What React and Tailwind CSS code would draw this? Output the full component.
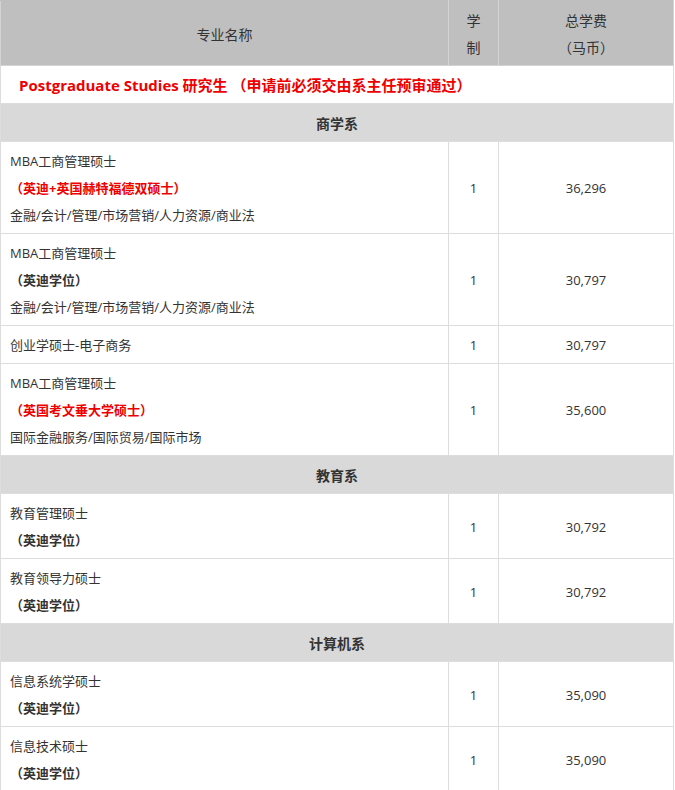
const sections = [
  {
    name: '商学系',
    rows: [
      { title: 'MBA工商管理硕士', note: '（英迪+英国赫特福德双硕士）', red: true, extra: '金融/会计/管理/市场营销/人力资源/商业法', fee: '36,296' },
      { title: 'MBA工商管理硕士', note: '（英迪学位）', extra: '金融/会计/管理/市场营销/人力资源/商业法', fee: '30,797' },
      { title: '创业学硕士-电子商务', fee: '30,797' },
      { title: 'MBA工商管理硕士', note: '（英国考文垂大学硕士）', red: true, extra: '国际金融服务/国际贸易/国际市场', fee: '35,600' },
    ],
  },
  {
    name: '教育系',
    rows: [
      { title: '教育管理硕士', note: '（英迪学位）', fee: '30,792' },
      { title: '教育领导力硕士', note: '（英迪学位）', fee: '30,792' },
    ],
  },
  {
    name: '计算机系',
    rows: [
      { title: '信息系统学硕士', note: '（英迪学位）', fee: '35,090' },
      { title: '信息技术硕士', note: '（英迪学位）', fee: '35,090' },
    ],
  },
];

const cell = 'border border-[#dddddd] px-[9px] pt-[6px] pb-[4px] leading-[27px]';

export default function App() {
  return (
    <div className="w-[675px] bg-white text-[13px] text-[#333333]" style={{ fontFamily: '"Open Sans", "Noto Sans CJK SC", sans-serif' }}>
      <table className="w-[674px] border-collapse table-fixed">
        <colgroup>
          <col className="w-[448px]" />
          <col className="w-[50px]" />
          <col />
        </colgroup>
        <thead>
          <tr className="bg-[#bfbfbf]">
            <th className="border border-[#d3d3d3] border-t-[#bfbfbf] px-[9px] pt-[6px] pb-[4px] leading-[27px] font-normal text-[14px]">专业名称</th>
            <th className="border border-[#d3d3d3] border-t-[#bfbfbf] pt-[6px] pb-[4px] leading-[27px] font-normal text-[14px]">学<br />制</th>
            <th className="border border-[#d3d3d3] border-t-[#bfbfbf] pt-[6px] pb-[4px] leading-[27px] font-normal text-[14px]">总学费<br />（马币）</th>
          </tr>
        </thead>
        <tbody>
          <tr>
            <td colSpan={3} className="border border-[#dddddd] pl-[18px] pt-[6px] pb-[4px] leading-[27px] text-[15px] font-bold text-[#ee0000]">
              Postgraduate Studies 研究生 （申请前必须交由系主任预审通过）
            </td>
          </tr>
          {sections.map((s) => (
            <Section key={s.name} section={s} />
          ))}
        </tbody>
      </table>
    </div>
  );
}

function Section({ section }) {
  return (
    <>
      <tr className="bg-[#d9d9d9]">
        <td colSpan={3} className={`${cell} text-center font-bold text-[14px]`}>{section.name}</td>
      </tr>
      {section.rows.map((r, i) => (
        <tr key={i}>
          <td className={cell}>
            <div>{r.title}</div>
            {r.note && <div className={`font-bold ${r.red ? 'text-[#ee0000]' : ''}`}>{r.note}</div>}
            {r.extra && <div>{r.extra}</div>}
          </td>
          <td className={`${cell} text-center px-0`}>1</td>
          <td className={`${cell} text-center`}>{r.fee}</td>
        </tr>
      ))}
    </>
  );
}
